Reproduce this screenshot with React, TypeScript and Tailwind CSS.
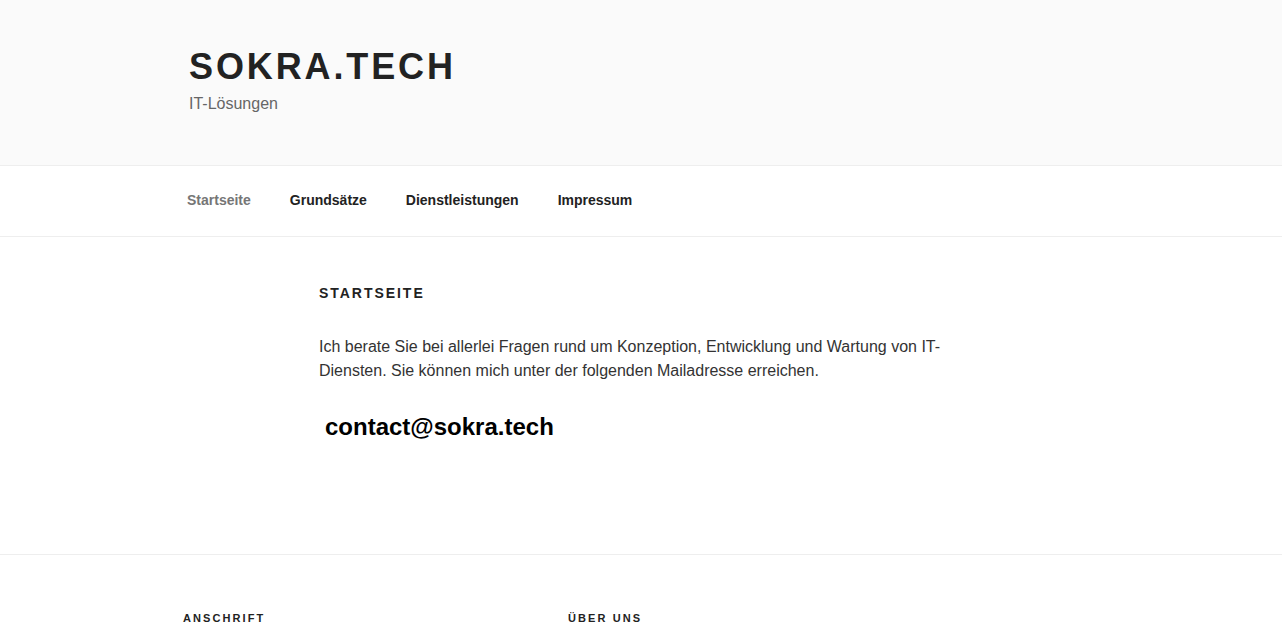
export default function App() {
  const font = { fontFamily: '"Liberation Sans", Arial, sans-serif' };
  return (
    <div className="min-h-[627px] bg-white text-[#333]" style={font}>
      <header className="h-[166px] bg-[#fafafa] border-b border-[#eee]">
        <div className="pl-[189px] pt-[45px]">
          <h1 className="text-[36px] leading-[44px] font-extrabold tracking-[0.08em] text-[#222]">SOKRA.TECH</h1>
          <p className="text-[16px] leading-[24px] text-[#666] mt-[3px]">IT-Lösungen</p>
        </div>
      </header>
      <nav className="h-[71px] border-b border-[#eee] flex items-center pl-[187px] pb-[2px] gap-[39px] text-[14px] font-bold text-[#222]">
        <span className="text-[#767676]">Startseite</span>
        <span>Grundsätze</span>
        <span>Dienstleistungen</span>
        <span>Impressum</span>
      </nav>
      <main className="pl-[319px] pt-[46px] h-[318px] border-b border-[#eee]">
        <h2 className="text-[14px] leading-[20px] font-bold tracking-[0.14em] text-[#222]">STARTSEITE</h2>
        <p className="mt-[32px] w-[628px] text-[16px] leading-[24px] text-[#333]">
          Ich berate Sie bei allerlei Fragen rund um Konzeption, Entwicklung und Wartung von IT-Diensten. Sie können mich unter der folgenden Mailadresse erreichen.
        </p>
        <p className="mt-[28px] pl-[6px] text-[24px] leading-[32px] font-bold text-black">contact@sokra.tech</p>
      </main>
      <footer className="flex pl-[183px] pt-[55px] text-[11px] font-bold tracking-[0.19em] text-[#222]">
        <div className="w-[385px]">ANSCHRIFT</div>
        <div>ÜBER UNS</div>
      </footer>
    </div>
  );
}
